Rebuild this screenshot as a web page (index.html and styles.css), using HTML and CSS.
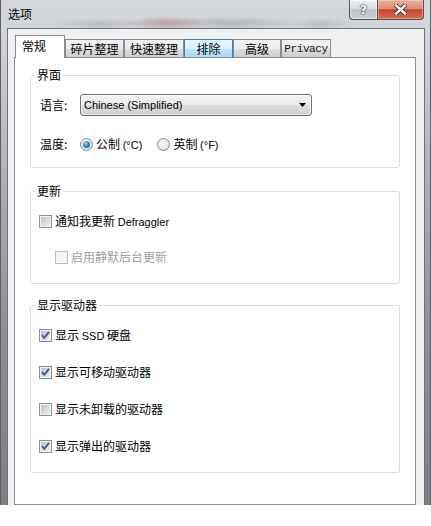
FILE: index.html
```html
<!DOCTYPE html>
<html lang="zh-CN">
<head>
<meta charset="utf-8">
<title>选项</title>
<link rel="stylesheet" href="styles.css">
</head>
<body>
<div class="window">
  <div class="titlebar">
    <span class="title">选项</span>
    <div class="caption">
      <div class="cbtn help"><span>?</span></div>
      <div class="cbtn close">
        <svg width="13" height="11" viewBox="0 0 13 11"><path d="M2 1.5 L11 9.5 M11 1.5 L2 9.5" stroke="#5a2a20" stroke-width="4.2" stroke-linecap="square"/><path d="M2 1.5 L11 9.5 M11 1.5 L2 9.5" stroke="#fff" stroke-width="2.4" stroke-linecap="square"/></svg>
      </div>
    </div>
  </div>
  <div class="client">
    <div class="tabs">
      <div class="tab active">常规</div>
      <div class="tab w59">碎片整理</div>
      <div class="tab w60">快速整理</div>
      <div class="tab w49 hover">排除</div>
      <div class="tab w48">高级</div>
      <div class="tab w50 mono">Privacy</div>
    </div>
    <div class="panel">
      <fieldset class="group g1">
        <legend>界面</legend>
        <div class="row sel-row">
          <span class="lbl">语言:</span>
          <div class="select"><span class="lat">Chinese (Simplified)</span>
            <svg class="arrow" width="7" height="4" viewBox="0 0 7 4"><path d="M0 0 H7 L3.5 4 Z" fill="#000"/></svg>
          </div>
        </div>
        <div class="row radio-row">
          <span class="lbl">温度:</span>
          <span class="opt"><span class="radio on"></span><span class="txt">公制 <span class="lat">(°C)</span></span></span>
          <span class="opt"><span class="radio"></span><span class="txt">英制 <span class="lat">(°F)</span></span></span>
        </div>
      </fieldset>
      <fieldset class="group g2">
        <legend>更新</legend>
        <div class="row cb-row"><span class="cb"></span><span class="txt">通知我更新 <span class="lat">Defraggler</span></span></div>
        <div class="row cb-row indent disabled"><span class="cb"></span><span class="txt">启用静默后台更新</span></div>
      </fieldset>
      <fieldset class="group g3">
        <legend>显示驱动器</legend>
        <div class="row cb-row"><span class="cb on"><svg width="11" height="11" viewBox="0 0 11 11"><path d="M2 5.2 L4.3 7.8 L9 1.8" fill="none" stroke="#3f58a3" stroke-width="1.9"/></svg></span><span class="txt">显示 <span class="lat">SSD</span> 硬盘</span></div>
        <div class="row cb-row"><span class="cb on"><svg width="11" height="11" viewBox="0 0 11 11"><path d="M2 5.2 L4.3 7.8 L9 1.8" fill="none" stroke="#3f58a3" stroke-width="1.9"/></svg></span><span class="txt">显示可移动驱动器</span></div>
        <div class="row cb-row"><span class="cb"></span><span class="txt">显示未卸载的驱动器</span></div>
        <div class="row cb-row"><span class="cb on"><svg width="11" height="11" viewBox="0 0 11 11"><path d="M2 5.2 L4.3 7.8 L9 1.8" fill="none" stroke="#3f58a3" stroke-width="1.9"/></svg></span><span class="txt">显示弹出的驱动器</span></div>
      </fieldset>
    </div>
  </div>
</div>
</body>
</html>
```
FILE: styles.css
```css
* { box-sizing: border-box; }
html, body { margin: 0; background: #fff; }
body {
  font-family: "Noto Sans CJK SC", sans-serif;
  font-size: 12px;
  line-height: 14px;
  color: #000;
}
.lat { font-family: "Liberation Sans", Arial, sans-serif; font-size: 11px; }

.window {
  width: 431px;
  height: 505px;
  overflow: hidden;
  border-left: 1px solid #5d6166;
  border-right: 1px solid #5d6166;
  background:
    radial-gradient(ellipse 40px 7px at 165px 23px, rgba(150,60,50,.35), transparent),
    radial-gradient(ellipse 70px 7px at 230px 23px, rgba(110,115,120,.3), transparent),
    radial-gradient(ellipse 50px 6px at 100px 24px, rgba(110,115,120,.25), transparent),
    radial-gradient(ellipse 30px 6px at 320px 24px, rgba(110,115,120,.25), transparent),
    linear-gradient(#d4d7db 0, #d0d3d7 40px, #b4b7bb 150px, #8e9195 320px, #7c7f83 505px);
  display: flex;
  flex-direction: column;
}
.titlebar {
  height: 28px;
  flex: none;
  display: flex;
  justify-content: space-between;
  align-items: flex-start;
  padding-left: 7px;
  padding-right: 6px;
}
.title { padding-top: 6px; line-height: 16px; }
.caption { display: flex; }
.cbtn {
  height: 20px;
  border: 1px solid #4c5158;
  border-top: none;
  display: flex;
  align-items: center;
  justify-content: center;
}
.help {
  width: 28px;
  border-right: none;
  border-radius: 0 0 0 4px;
  background: linear-gradient(#edf0f3, #d9dde2 45%, #bcc2c9 52%, #ccd1d6);
  box-shadow: inset 0 0 0 1px rgba(255,255,255,.5);
}
.help span {
  font-family: "DejaVu Sans", sans-serif;
  font-weight: bold;
  font-size: 12px;
  color: #fff;
  text-shadow: 0 0 1px #333, 0 0 1px #333, 0 0 2px #555;
}
.close {
  width: 47px;
  border-radius: 0 0 4px 0;
  background: linear-gradient(#e9b0a1, #dc8c77 45%, #c8442c 52%, #d66d55);
  box-shadow: inset 0 0 0 1px rgba(255,220,210,.45);
}
.close svg { display: block; }

.client {
  margin-left: 6px;
  width: 418px;
  flex: 1;
  background: #f0f0f0;
  border: 1px solid #6d7075;
  border-bottom: none;
  padding: 6px 8px 0 6px;
  display: flex;
  flex-direction: column;
}
.tabs {
  height: 22px;
  flex: none;
  display: flex;
  align-items: flex-end;
  padding-left: 1px;
}
.tab {
  height: 18px;
  border: 1px solid #898c95;
  border-bottom: none;
  background: linear-gradient(#f2f2f2, #ebebeb 50%, #dddddd 51%, #cfcfcf);
  display: flex;
  align-items: center;
  justify-content: center;
  line-height: 14px;
}
.tab.active {
  width: 50px;
  height: 23px;
  margin-bottom: -1px;
  position: relative;
  z-index: 1;
  background: #fff;
  justify-content: flex-start;
  padding-left: 6px;
  padding-bottom: 3px;
}
.tab.hover {
  border-color: #3c7fb1;
  background: linear-gradient(#eaf6fd, #d9f0fc 50%, #bee6fd 51%, #a7d9f5);
}
.w59 { width: 59px; }
.w60 { width: 60px; }
.w49 { width: 49px; }
.w48 { width: 48px; }
.w50 { width: 50px; }
.mono {
  font-family: "Liberation Mono", monospace;
  font-size: 11px;
  letter-spacing: -0.4px;
  color: #111;
}

.panel {
  flex: 1;
  background: #fff;
  border: 1px solid #898c95;
  padding: 0 15px;
}
.group {
  margin: 0;
  padding: 0;
  border: 1px solid #d5dfe5;
  border-radius: 3px;
  min-width: 0;
}
.group legend {
  margin-left: 4px;
  padding: 0 2px;
  line-height: 14px;
}
.g1 { margin-top: 10px; padding: 12px 0 12px 0; }
.g2 { margin-top: 16px; padding: 13px 0 16px 0; }
.g3 { margin-top: 14px; padding: 13px 0 16px 0; }

.row { display: flex; align-items: center; }
.txt { white-space: pre; }
.sel-row { height: 22px; padding-left: 9px; }
.radio-row { height: 22px; padding-left: 9px; margin-top: 17px; }
.lbl { width: 40px; flex: none; }
.select {
  width: 232px;
  height: 22px;
  border: 1px solid #707070;
  border-radius: 3px;
  background: linear-gradient(#f2f2f2, #ebebeb 50%, #dddddd 51%, #cfcfcf);
  box-shadow: inset 0 0 0 1px rgba(255,255,255,.6);
  display: flex;
  align-items: center;
  justify-content: space-between;
  padding: 0 5px 0 3px;
}
.arrow { display: block; }
.opt { display: flex; align-items: center; margin-right: 15px; }
.radio {
  width: 13px;
  height: 13px;
  border-radius: 50%;
  border: 1px solid #8b8b8b;
  background: radial-gradient(circle at 40% 35%, #ffffff, #e6e6e6 60%, #c9c9c9);
  margin-right: 3px;
  flex: none;
  display: flex;
  align-items: center;
  justify-content: center;
}
.radio.on::after {
  content: "";
  width: 7px;
  height: 7px;
  border-radius: 50%;
  background: radial-gradient(circle at 40% 35%, #a9dcfa, #2a8ad4 45%, #0b4b8f);
}
.cb-row { height: 20px; padding-left: 8px; }
.g2 .cb-row + .cb-row { margin-top: 16px; }
.g3 .cb-row + .cb-row { margin-top: 17px; }
.indent { padding-left: 24px; }
.cb {
  width: 13px;
  height: 13px;
  flex: none;
  border: 1px solid #8e8f8f;
  background: linear-gradient(135deg, #b9bdc2, #e9eaeb 80%);
  box-shadow: inset 0 0 0 1px #f4f4f4;
  margin-right: 3px;
  display: flex;
}
.cb svg { display: block; }
.disabled { color: #a0a0a0; }
.disabled .cb {
  border-color: #bcbcbc;
  background: #f4f4f4;
  box-shadow: none;
}
```
